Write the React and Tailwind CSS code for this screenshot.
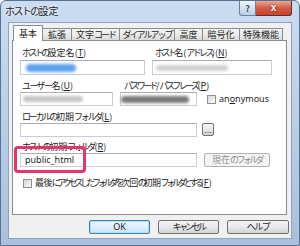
import React from "react";

const jp = "font-['Noto_Sans_CJK_JP',sans-serif]";

const KANA = /([\u3040-\u30ff]+)/;
const J = ({ t, kana = "tracking-[-2.6px]", kanji = "" }) =>
  t.split(KANA).map((s, i) =>
    i % 2 ? (
      <span key={i} className={kana}>
        {s}
      </span>
    ) : (
      <span key={i} className={kanji}>
        {s}
      </span>
    )
  );

const Key = ({ k }) => (
  <>
    (<span className="underline">{k}</span>)
  </>
);

const Field = ({ className = "", children }) => (
  <div
    className={`flex items-center border border-[#c9ced6] border-t-[#abadb3] bg-white ${className}`}
  >
    {children}
  </div>
);

const Blur = ({ className }) => <div className={`blur-[1.5px] rounded-full ${className}`} />;

const Button = ({ children, className = "", primary, disabled }) => {
  let look =
    "border-[#707070] bg-gradient-to-b from-[#f4f4f4] via-[#e9e9e9] to-[#d3d3d3] text-[#1e1e1e]";
  if (primary)
    look =
      "border-[#3c7fb1] bg-gradient-to-b from-[#eef7fd] via-[#dceffb] to-[#c5e3f7] text-[#1e1e1e] shadow-[inset_0_0_0_1px_#b5dcf5]";
  if (disabled) look = "border-[#adb2b5] bg-[#f4f4f4] text-[#8d8d8d]";
  return (
    <div
      className={`flex items-center justify-center whitespace-nowrap rounded-[2px] border text-[9px] leading-[12px] ${look} ${className}`}
    >
      {children}
    </div>
  );
};

const Check = () => (
  <div className="h-[9px] w-[9px] border border-[#8e8f8f] bg-gradient-to-br from-[#d6d6d6] to-[#fbfbfb]" />
);

const tabs = [
  ["拡張", "w-[29px]"],
  ["文字コード", "w-[48px]"],
  ["ダイアルアップ", "w-[55px]"],
  ["高度", "w-[28px]"],
  ["暗号化", "w-[37px]"],
  ["特殊機能", "w-[43px]"],
];

export default function App() {
  return (
    <div
      className={`flex h-[246px] w-[300px] flex-col rounded-t-[6px] border border-[#5b7190] bg-gradient-to-b from-[#cadcf0] via-[#b9cee7] to-[#a8c0dc] ${jp}`}
    >
      {/* title bar */}
      <div className="flex h-[21px] items-start justify-between">
        <div className="pl-[4px] pt-[3px] text-[10px] leading-[14px] text-[#1e1e1e] [text-shadow:0_0_5px_#ffffff]">
          <J t="ホストの設定" kana="tracking-[-1.6px]" />
        </div>
        <div className="mr-[7px] flex">
          <div className="flex h-[15px] w-[17px] items-center justify-center rounded-bl-[3px] border border-t-0 border-[#6b7f9b] bg-gradient-to-b from-[#eef3f9] via-[#d6e2f0] to-[#bccee4] text-[9px] font-bold leading-none text-[#3c4f6b]">
            ?
          </div>
          <div className="flex h-[15px] w-[36px] items-center justify-center rounded-br-[3px] border border-l-0 border-t-0 border-[#6e2a22] bg-gradient-to-b from-[#e8a898] via-[#d25a45] to-[#c8442e] font-['Liberation_Sans',sans-serif] text-[10px] font-bold leading-none text-white [text-shadow:0_0_2px_#5a1a12]">
            x
          </div>
        </div>
      </div>

      {/* frame + client */}
      <div className="flex flex-1">
        <div className="w-[7px]" />
        <div className="flex h-[217px] w-[284px] flex-col border border-[#8da3c0] bg-[#f0f0f0]">
          {/* tabs */}
          <div className="ml-[4px] mt-[2px] flex h-[16px] items-end text-[9px] leading-[12px] text-[#1e1e1e]">
            <div className="relative z-10 flex h-[16px] w-[30px] justify-center border border-b-0 border-[#898c95] bg-white pt-[2px]">
              基本
            </div>
            {tabs.map(([t, w]) => (
              <div
                key={t}
                className={`flex h-[13px] justify-center whitespace-nowrap border border-l-0 border-[#898c95] bg-gradient-to-b from-[#f3f3f3] via-[#ebebeb] to-[#d9d9d9] ${w}`}
              >
                <J t={t} kana="tracking-[-2px]" />
              </div>
            ))}
          </div>

          {/* panel */}
          <div className="relative -mt-[1px] ml-[3px] flex h-[175px] w-[275px] flex-col whitespace-nowrap border border-[#898c95] bg-white px-[7px] text-[9px] leading-[12px] text-[#1e1e1e]">
            <div className="mt-[6px] flex h-[12px]">
              <div className="w-[132px] pl-[2px]">
                <J t="ホストの設定名" />
                <Key k="T" />
              </div>
              <div className="pl-[3px]">
                <J t="ホスト名(アドレス)" />
                <Key k="N" />
              </div>
            </div>
            <div className="mt-[1px] flex h-[15px]">
              <Field className="w-[125px] pl-[5px]">
                <Blur className="h-[8px] w-[50px] bg-[#5ea2f2]" />
              </Field>
              <Field className="ml-[7px] w-[120px] pl-[3px]">
                <Blur className="h-[6px] w-[72px] bg-[#d0d0d0]" />
              </Field>
            </div>

            <div className="mt-[5px] flex h-[12px]">
              <div className="w-[100px] pl-[2px]">
                <J t="ユーザー名" kana="tracking-[-1.6px]" />
                <Key k="U" />
              </div>
              <div className="pl-[4px]">
                <J t="パスワード/パスフレーズ" />
                <Key k="P" />
              </div>
            </div>
            <div className="flex h-[14px] items-center">
              <Field className="h-[14px] w-[93px] pl-[2px]">
                <Blur className="h-[6px] w-[60px] bg-[#c4c4c4]" />
              </Field>
              <Field className="ml-[7px] h-[14px] w-[77px]">
                <Blur className="h-[7px] w-[68px] bg-[#777777]" />
              </Field>
              <div className="ml-[10px]">
                <Check />
              </div>
              <div className="ml-[3px] font-['Noto_Sans',sans-serif] text-[9px]">
                an<span className="underline">o</span>nymous
              </div>
            </div>

            <div className="mt-[5px] h-[12px] pl-[2px]">
              <J t="ローカルの初期フォルダ" kana="tracking-[-2.2px]" />
              <Key k="L" />
            </div>
            <div className="flex h-[14px]">
              <Field className="h-[14px] w-[177px]" />
              <Button className="ml-[5px] h-[13px] w-[12px] font-['Liberation_Sans',sans-serif] text-[8px]">
                ...
              </Button>
            </div>

            <div className="mt-[4px] h-[12px] pl-[2px]">
              <J t="ホストの初期フォルダ" kana="tracking-[-2.2px]" />
              <Key k="R" />
            </div>
            <div className="flex h-[14px]">
              <Field className="h-[14px] w-[177px] pl-[4px] font-['Noto_Sans',sans-serif] text-[9px]">
                public_html
              </Field>
              <Button disabled className="ml-[7px] h-[14px] w-[66px]">
                <J t="現在のフォルダ" />
              </Button>
            </div>

            <div className="mt-[10px] flex h-[12px] items-center">
              <div className="ml-[3px]">
                <Check />
              </div>
              <div className="ml-[3px]">
                <J
                  t="最後にアクセスしたフォルダを次回の初期フォルダとする"
                  kana="tracking-[-3.2px]"
                  kanji="tracking-[-0.6px]"
                />
                <Key k="F" />
              </div>
            </div>

            {/* highlight marker */}
            <div className="absolute left-[1px] top-[105px] h-[27px] w-[72px] rounded-[4px] border-[3px] border-[#e6336b]" />
          </div>

          {/* dialog buttons */}
          <div className="mt-[5px] flex justify-end gap-[8px] pr-[2px]">
            <Button primary className="h-[14px] w-[61px] font-['Noto_Sans',sans-serif]">
              OK
            </Button>
            <Button className="h-[14px] w-[61px]">
              <J t="キャンセル" />
            </Button>
            <Button className="h-[14px] w-[62px]">
              <J t="ヘルプ" kana="tracking-[-1.5px]" />
            </Button>
          </div>
        </div>
        <div className="flex-1" />
      </div>
      <div className="h-[6px]" />
    </div>
  );
}
